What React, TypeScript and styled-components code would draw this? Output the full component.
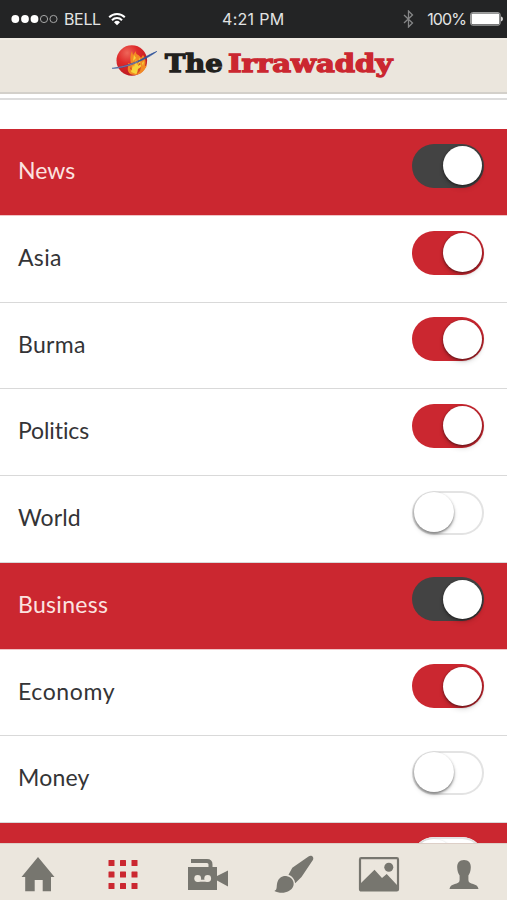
import React from "react";
import styled, { createGlobalStyle } from "styled-components";

const RED = "#cb2730";
const BEIGE = "#ebe6dd";
const GREY = "#77766f";

const GlobalStyle = createGlobalStyle`
  * { box-sizing: border-box; }
  body { margin: 0; background: #fff; }
`;

const Screen = styled.div`
  width: 507px;
  height: 900px;
  display: flex;
  flex-direction: column;
  overflow: hidden;
  background: #fff;
`;

const StatusBar = styled.div`
  flex: none;
  height: 38px;
  display: grid;
  grid-template-columns: 211px auto 1fr;
  align-items: center;
  padding: 0 4px 0 11px;
  background: #232425;
  color: #e2e3e3;
  font: 16px/38px Inter, sans-serif;
`;

const Carrier = styled.div`
  display: flex;
  align-items: center;
  height: 38px;
`;

const CarrierName = styled.span`
  margin: 0 7px 0 6px;
  font-size: 16px;
  letter-spacing: -0.35px;
`;

const Clock = styled.span`
  letter-spacing: 0.3px;
`;

const Power = styled(Carrier)`
  justify-content: flex-end;
`;

const Percent = styled.span`
  margin: 0 4px 0 13px;
  letter-spacing: -0.9px;
`;

const Header = styled.header`
  flex: none;
  height: 56px;
  display: flex;
  align-items: flex-start;
  padding: 4px 0 0 110px;
  background: ${BEIGE};
  border-top: 2px solid #f0ece5;
  border-bottom: 2px solid #d3d0ca;
`;

const Brand = styled.h1`
  display: grid;
  grid-template-columns: 63px auto;
  margin: 0 0 0 6px;
  font: 700 24px/39px "DejaVu Serif", serif;
  -webkit-text-stroke: 1.3px currentColor;
`;

const BrandWord = styled.span<{ $red?: boolean }>`
  color: ${(p) => (p.$red ? RED : "#22211d")};
  transform-origin: left center;
  transform: scaleX(${(p) => (p.$red ? 1.21 : 1.14)});
`;

const Divider = styled.div`
  flex: none;
  height: 6px;
  border-bottom: 2px solid #dddddd;
`;

const List = styled.main`
  flex: 1;
  min-height: 0;
  overflow: hidden;
  padding-top: 29.4px;
`;

const Row = styled.div<{ $section?: boolean }>`
  height: 86.7px;
  display: flex;
  justify-content: space-between;
  align-items: flex-start;
  padding: 14px 23px 0 18px;
  color: ${(p) => (p.$section ? "#fbe3e0" : "#343436")};
  background: ${(p) => (p.$section ? RED : "#fff")};
  border-bottom: 1px solid ${(p) => (p.$section ? "#f0c4c6" : "#d9d9d9")};
`;

const Label = styled.span<{ $tracking?: number }>`
  font: 400 23px/54px Lato, sans-serif;
  letter-spacing: ${(p) => p.$tracking ?? 0.3}px;
`;

const Track = styled.span<{ $on: boolean; $section?: boolean }>`
  flex: none;
  width: 72px;
  height: 44px;
  margin-top: 0.5px;
  padding: ${(p) => (p.$on ? "2.5px 2.500px" : "0")};
  display: flex;
  justify-content: ${(p) => (p.$on ? "flex-end" : "flex-start")};
  border-radius: 22px;
  background: ${(p) => (!p.$on ? "#fff" : p.$section ? "#434343" : RED)};
  box-shadow: ${(p) => (p.$on ? "none" : "inset 0 0 0 2px #e3e3e3")};
`;

const Knob = styled.span<{ $on: boolean }>`
  width: ${(p) => (p.$on ? 39 : 40)}px;
  height: ${(p) => (p.$on ? 39 : 40)}px;
  margin: ${(p) => (p.$on ? "0" : "1.5px 0 0 2px")};
  border-radius: 50%;
  background: #fff;
  box-shadow: ${(p) =>
    p.$on
      ? "0 1px 3px rgba(0,0,0,.55), 0 4px 5px rgba(0,0,0,.1)"
      : "0 1.5px 2.5px rgba(0,0,0,.48), 0 3px 5px rgba(0,0,0,.12)"};
`;

const TabBar = styled.nav`
  flex: none;
  height: 57px;
  background: ${BEIGE};
  border-top: 1px solid #ddcfc7;
  display: grid;
  grid-template-columns: 76px 94px 76px 95px 76px 94px;
  justify-items: center;
`;

const Tab = styled.a<{ $active?: boolean }>`
  display: flex;
  color: ${(p) => (p.$active ? RED : GREY)};
`;

const rows = [
  { label: "News", on: true, section: true, tracking: 0 },
  { label: "Asia", on: true },
  { label: "Burma", on: true },
  { label: "Politics", on: true, tracking: -0.1 },
  { label: "World", on: false, tracking: 0.1 },
  { label: "Business", on: true, section: true },
  { label: "Economy", on: true, tracking: 0.6 },
  { label: "Money", on: false, tracking: 0.2 },
  { label: "", on: false, section: true },
];

const Signal = () => (
  <svg width="47" height="12" viewBox="0 0 47 12">
    <g fill="#fff">
      <circle cx="4.3" cy="6" r="3.9" />
      <circle cx="14" cy="6" r="3.9" />
      <circle cx="23.5" cy="6" r="3.9" />
    </g>
    <g fill="none" stroke="#a5a6a6" strokeWidth="1">
      <circle cx="33" cy="6" r="3.6" />
      <circle cx="42.5" cy="6" r="3.6" />
    </g>
  </svg>
);

const Wifi = () => (
  <svg width="18" height="14" viewBox="0 0 18 14" fill="none" stroke="#fff" strokeWidth="2">
    <path d="M1.2 5.2a11 11 0 0 1 15.6 0M4 8.2a7 7 0 0 1 10 0" />
    <path d="M6 10.2a4.3 4.3 0 0 1 6 0L9 13.3z" fill="#fff" stroke="none" />
  </svg>
);

const Bluetooth = () => (
  <svg width="11" height="18" viewBox="0 0 11 18" fill="none" stroke="#858687" strokeWidth="1.3">
    <path d="M1 5l8.500 8L5.500 17V1l4 4L1 13" />
  </svg>
);

const Battery = () => (
  <svg width="33" height="14" viewBox="0 0 33 14">
    <rect x=".6" y=".6" width="29.5" height="12.6" rx="2" fill="none" stroke="#a9aaaa" />
    <rect x="1.500" y="1.500" width="27.800" height="10.800" rx="1" fill="#fff" />
    <path d="M31 4.600q2 .4 2 2.400t-2 2.400z" fill="#d8d8d8" />
  </svg>
);

const Logo = () => (
  <svg width="49" height="36" viewBox="0 0 49 36">
    <defs>
      <radialGradient id="globe" cx=".35" cy=".25" r=".85">
        <stop offset="0" stopColor="#ee6659" />
        <stop offset=".4" stopColor="#df2b2b" />
        <stop offset="1" stopColor="#b5151f" />
      </radialGradient>
    </defs>
    <circle cx="21.800" cy="16.500" r="15.300" fill="url(#globe)" />
    <path
      d="M18 27c-1-3 1-5 0-8l3 1c-1-4-1-9 1-13l1 4 3-4c-1 4 3 3 5 7l2-3c3 4 3 8 2 11l2-1c-2 6-7 10-12 10-3 0-6-1-7-4z"
      fill="#f28a24"
    />
    <path
      d="M21 28l2-7 1 2 2-8 1 6 3-4 1 5-3 6-2 2zM23 17l1-6 2 3zM29 14l2 2-2 2zM32 19l2-2-1 5z"
      fill="#f6d43b"
    />
    <path d="M27 30l1-5 3-2-1 4zM21 22l1 4-2-1zM29 19l2 1-3 2z" fill="#d84822" />
    <path d="M2 24.300c7-.8 14-2.600 21-5.300C32 15.700 38 10.700 47 7.300 39 13.500 32 16.500 24 19.700 17 22.500 10 24.600 2 24.300z" fill="#31549b" stroke="#31549b" strokeWidth=".5" />
    <path d="M8 23.500c7-1 14-3 20-6" fill="none" stroke="#9685a5" strokeWidth=".7" />
  </svg>
);

const Home = () => (
  <svg width="34" height="56" viewBox="0 0 34 56" fill="currentColor">
    <path d="M17 13L33.500 33H30v14.300h-8.300V36h-8v11.300H4.200V33H.5z" />
  </svg>
);

const Grid = () => (
  <svg width="30" height="56" viewBox="0 0 30 56" fill="currentColor">
    {[16, 27.6, 39].map((y) =>
      [0.5, 12, 23.5].map((x) => <rect key={`${x}-${y}`} x={x} y={y} width="6" height="6" rx=".5" />),
    )}
  </svg>
);

const Video = () => (
  <svg width="42" height="56" viewBox="0 0 42 56">
    <path d="M4 17h16q3.500 0 3.500 3.500v4" fill="none" stroke="currentColor" strokeWidth="4" />
    <path d="M1 23h29v9l11-5.500v16L30 36.500V46H1z" fill="currentColor" />
    <path d="M10.500 36.700h10" stroke={BEIGE} strokeWidth="2" />
    <circle cx="10.700" cy="34.500" r="3.400" fill={BEIGE} />
    <circle cx="20.700" cy="34.500" r="3.400" fill={BEIGE} />
  </svg>
);

const Brush = () => (
  <svg width="42" height="56" viewBox="0 0 42 56" fill="currentColor">
    <path d="M35.500 12.500c2.700-2.300 6 .5 4.400 3.500L28.500 33l-6.300 6.200c-.6-4-3-7-6.700-8.400l3.800-7z" />
    <path d="M14 32.200c4.800 1 7.700 5.300 6.400 9.500-2.500 7.500-13 8.600-19 5.200 3.200-1 1.800-4.400 2.900-8.300 1.200-4.400 5-7.200 9.700-6.400z" />
  </svg>
);

const Picture = () => (
  <svg width="42" height="56" viewBox="0 0 42 56" fill="currentColor">
    <rect x="2" y="14.200" width="38" height="32.300" rx="1.200" fill="none" stroke="currentColor" strokeWidth="2.200" />
    <path d="M3 39l13.500-13.300L24 34l4.700-4L39 41v5H3z" />
    <circle cx="30.800" cy="23.200" r="4.500" />
  </svg>
);

const Person = () => (
  <svg width="30" height="56" viewBox="0 0 30 56" fill="currentColor">
    <path d="M15 16c4.700 0 7 3 6.800 7.500-.1 3.800-1.200 6.300-2.400 8v4.500c0 5.300 9.400 2.500 10.100 9H.5c.7-6.500 10.100-3.700 10.100-9v-4.500c-1.200-1.700-2.300-4.200-2.400-8C8 19 10.300 16 15 16z" />
  </svg>
);

const Toggle = ({ on, section }: { on: boolean; section?: boolean }) => (
  <Track $on={on} $section={section}>
    <Knob $on={on} />
  </Track>
);

export default function App() {
  return (
    <Screen>
      <GlobalStyle />
      <StatusBar>
        <Carrier>
          <Signal />
          <CarrierName>BELL</CarrierName>
          <Wifi />
        </Carrier>
        <Clock>4:21 PM</Clock>
        <Power>
          <Bluetooth />
          <Percent>100%</Percent>
          <Battery />
        </Power>
      </StatusBar>
      <Header>
        <Logo />
        <Brand>
          <BrandWord>The</BrandWord>
          <BrandWord $red>Irrawaddy</BrandWord>
        </Brand>
      </Header>
      <Divider />
      <List>
        {rows.map((row, i) => (
          <Row key={i} $section={row.section}>
            <Label $tracking={row.tracking}>{row.label}</Label>
            <Toggle on={row.on} section={row.section} />
          </Row>
        ))}
      </List>
      <TabBar>
        <Tab><Home /></Tab>
        <Tab $active><Grid /></Tab>
        <Tab><Video /></Tab>
        <Tab><Brush /></Tab>
        <Tab><Picture /></Tab>
        <Tab><Person /></Tab>
      </TabBar>
    </Screen>
  );
}
